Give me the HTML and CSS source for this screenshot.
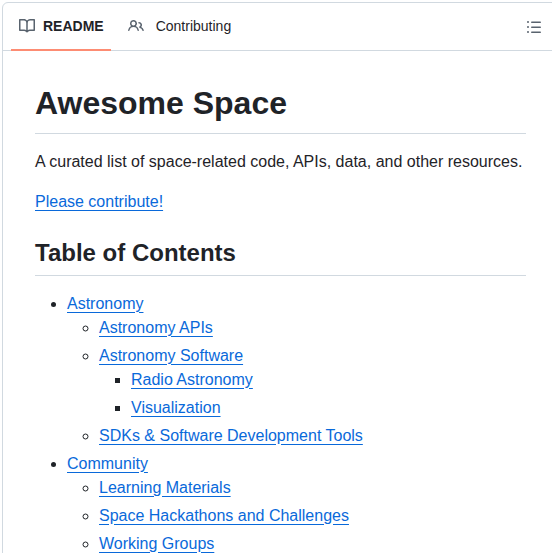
FILE: index.html
```html
<!DOCTYPE html>
<html lang="en">
<head>
<meta charset="utf-8">
<title>Awesome Space</title>
<link rel="stylesheet" href="styles.css">
</head>
<body>
<div class="box">
  <header class="tabs">
    <nav class="tab-list">
      <a class="tab active" href="#">
        <svg class="icon" viewBox="0 0 16 16" width="16" height="16"><path d="M0 1.75A.75.75 0 0 1 .75 1h4.253c1.227 0 2.317.59 3 1.501A3.743 3.743 0 0 1 11.006 1h4.245a.75.75 0 0 1 .75.75v10.5a.75.75 0 0 1-.75.75h-4.507a2.25 2.25 0 0 0-1.591.659l-.622.621a.75.75 0 0 1-1.06 0l-.622-.621A2.25 2.25 0 0 0 5.258 13H.75a.75.75 0 0 1-.75-.75Zm7.251 10.324.004-5.073-.002-2.253A2.25 2.25 0 0 0 5.003 2.5H1.5v9h3.757a3.75 3.75 0 0 1 1.994.574ZM8.755 4.75l-.004 7.322a3.752 3.752 0 0 1 1.992-.572H14.5v-9h-3.495a2.25 2.25 0 0 0-2.25 2.25Z"/></svg>
        <span>README</span>
      </a>
      <a class="tab second" href="#">
        <svg class="icon" viewBox="0 0 16 16" width="16" height="16"><path d="M2 5.5a3.5 3.5 0 1 1 5.898 2.549 5.508 5.508 0 0 1 3.034 4.084.75.75 0 1 1-1.482.235 4 4 0 0 0-7.9 0 .75.75 0 0 1-1.482-.236A5.507 5.507 0 0 1 3.102 8.05 3.493 3.493 0 0 1 2 5.5ZM11 4a3.001 3.001 0 0 1 2.22 5.018 5.01 5.01 0 0 1 2.56 3.012.749.749 0 0 1-.885.954.752.752 0 0 1-.549-.514 3.507 3.507 0 0 0-2.522-2.372.75.75 0 0 1-.574-.73v-.352a.75.75 0 0 1 .416-.672A1.5 1.5 0 0 0 11 5.5.75.75 0 0 1 11 4Zm-5.5-.5a2 2 0 1 0-.001 3.999A2 2 0 0 0 5.5 3.5Z"/></svg>
        <span>Contributing</span>
      </a>
    </nav>
    <button class="outline" type="button" aria-label="Outline">
      <svg class="icon" viewBox="0 0 16 16" width="16" height="16"><path d="M5.75 2.5h8.5a.75.75 0 0 1 0 1.5h-8.5a.75.75 0 0 1 0-1.5Zm0 5h8.5a.75.75 0 0 1 0 1.5h-8.5a.75.75 0 0 1 0-1.5Zm0 5h8.5a.75.75 0 0 1 0 1.5h-8.5a.75.75 0 0 1 0-1.5ZM2 14a1 1 0 1 1 0-2 1 1 0 0 1 0 2Zm1-6a1 1 0 1 1-2 0 1 1 0 0 1 2 0ZM2 4a1 1 0 1 1 0-2 1 1 0 0 1 0 2Z"/></svg>
    </button>
  </header>
  <article class="markdown">
    <h1>Awesome Space</h1>
    <p>A curated list of space-related code, APIs, data, and other resources.</p>
    <p><a href="#">Please contribute!</a></p>
    <h2>Table of Contents</h2>
    <ul>
      <li><a href="#">Astronomy</a>
        <ul>
          <li><a href="#">Astronomy APIs</a></li>
          <li><a href="#">Astronomy Software</a>
            <ul>
              <li><a href="#">Radio Astronomy</a></li>
              <li><a href="#">Visualization</a></li>
            </ul>
          </li>
          <li><a href="#">SDKs &amp; Software Development Tools</a></li>
        </ul>
      </li>
      <li><a href="#">Community</a>
        <ul>
          <li><a href="#">Learning Materials</a></li>
          <li><a href="#">Space Hackathons and Challenges</a></li>
          <li><a href="#">Working Groups</a></li>
        </ul>
      </li>
    </ul>
  </article>
</div>
</body>
</html>
```
FILE: styles.css
```css
html, body {
  margin: 0;
  height: 100%;
  overflow: hidden;
  background: #fff;
}
body {
  padding: 2px 0 0 2px;
  box-sizing: border-box;
  font-family: "Liberation Sans", Arial, sans-serif;
  font-size: 16px;
  line-height: 1.5;
  color: #1f2328;
}
.box {
  width: 555px;
  border: 1px solid #d1d9e0;
  border-radius: 6px;
}
.tabs {
  display: flex;
  align-items: center;
  justify-content: space-between;
  height: 47px;
  padding: 0 8px;
  border-bottom: 1px solid #d1d9e0;
}
.tab-list {
  display: flex;
  height: 100%;
  font-size: 14px;
  line-height: 21px;
}
.tab {
  display: flex;
  align-items: center;
  gap: 8px;
  padding: 0 8px;
  color: #1f2328;
  text-decoration: none;
  border-bottom: 2px solid transparent;
  margin-bottom: -1px;
}
.tab .icon {
  fill: #59636e;
}
.tab.active {
  font-weight: 700;
  padding-right: 7px;
  border-bottom-color: #fd8c73;
}
.tab.second {
  gap: 12px;
  margin-left: 9px;
}
.outline {
  display: flex;
  padding: 0;
  margin-right: 8px;
  border: 0;
  background: none;
}
.outline .icon {
  fill: #59636e;
}
.markdown {
  padding: 32px;
}
h1, h2 {
  margin: 24px 0 16px;
  font-weight: 600;
  line-height: 1.25;
  border-bottom: 1px solid #d1d9e0;
}
h1 {
  margin-top: 0;
  font-size: 32px;
  padding-bottom: 9.6px;
}
h2 {
  font-size: 24px;
  padding-bottom: 7.2px;
}
p {
  margin: 0 0 16px;
}
a {
  color: #0969da;
}
.markdown a {
  text-underline-offset: 3.2px;
}
ul {
  margin: 0;
  padding-left: 32px;
  list-style: disc;
}
ul ul {
  list-style: circle;
}
ul ul ul {
  list-style: square;
}
li + li {
  margin-top: 4px;
}
```
